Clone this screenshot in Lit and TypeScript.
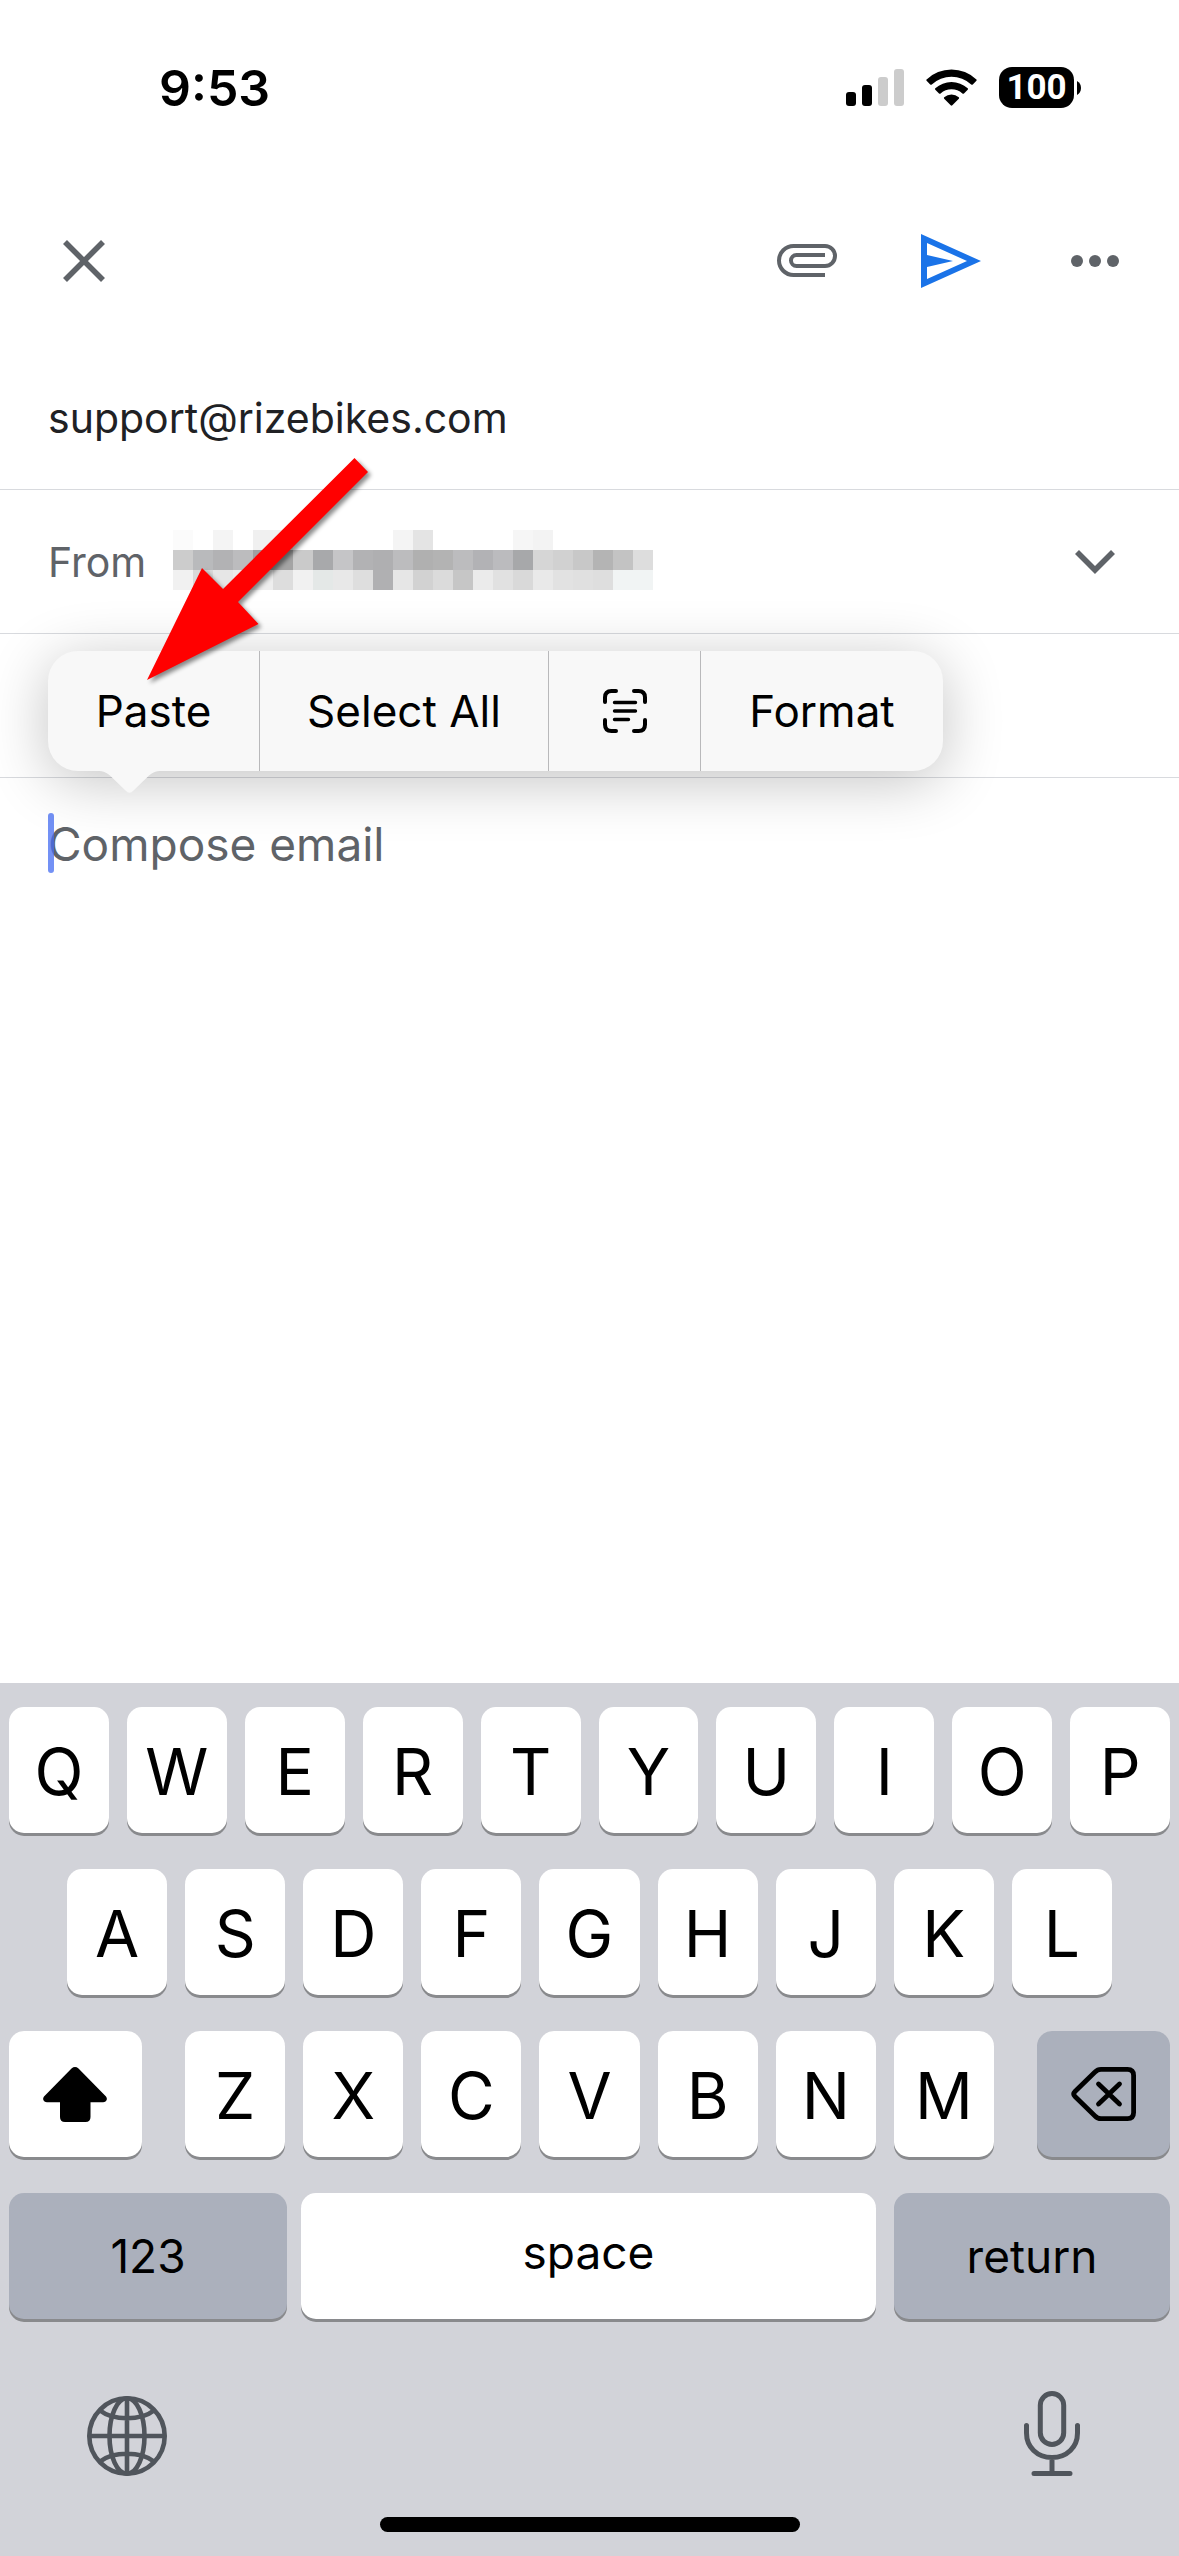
import { LitElement, html, css, svg } from "lit";
import { customElement, property, state } from "lit/decorators.js";
import { classMap } from "lit/directives/class-map.js";

const FONT = css`Inter, "Liberation Sans", sans-serif`;

/* Phone status bar: clock, signal, wifi and battery. */
@customElement("status-bar")
class StatusBar extends LitElement {
  @property() time = "9:53";
  @property({ type: Number }) battery = 100;

  static styles = css`
    :host {
      display: flex;
      align-items: center;
      justify-content: space-between;
      box-sizing: border-box;
      height: 175px;
      padding: 0 98px 0 159px;
      font-family: ${FONT};
      color: #000;
    }
    .time {
      font-size: 50px;
      line-height: 60px;
      font-weight: 600;
    }
    .indicators {
      display: flex;
      align-items: center;
      gap: 22px;
    }
    .battery {
      display: flex;
      align-items: center;
      gap: 3px;
    }
    .level {
      display: grid;
      place-items: center;
      box-sizing: border-box;
      width: 75px;
      height: 41px;
      border-radius: 13px;
      background: #000;
      color: #fff;
      font-family: Roboto, ${FONT};
      font-size: 35px;
      line-height: 40px;
      font-weight: 700;
    }
    svg {
      display: block;
    }
  `;

  render() {
    return html`
      <span class="time">${this.time}</span>
      <div class="indicators">
        <svg width="58" height="37" viewBox="0 0 58 37" role="img" aria-label="Signal">
          <rect x="0" y="23" width="10" height="14" rx="3" />
          <rect x="16" y="16" width="10" height="21" rx="3" />
          <rect x="32" y="8" width="10" height="29" rx="3" fill="#ccc" />
          <rect x="48" y="0" width="10" height="37" rx="3" fill="#ccc" />
        </svg>
        <svg width="51" height="37" viewBox="0 0 51 37" role="img" aria-label="Wi-Fi">
          <path d="M0.6 10.4 A36 36 0 0 1 50.4 10.4 Q51.1 11 50.4 11.8 L46.8 15.4 Q46 16 45.2 15.4 A29 29 0 0 0 5.8 15.4 Q5 16 4.2 15.4 L0.6 11.8 Q-0.1 11 0.6 10.4Z" />
          <path d="M9.3 19.3 A24 24 0 0 1 41.7 19.3 Q42.4 20 41.7 20.7 L38 24.4 Q37.2 25 36.4 24.4 A16.5 16.5 0 0 0 14.6 24.4 Q13.8 25 13 24.4 L9.3 20.7 Q8.6 20 9.3 19.3Z" />
          <path d="M18.2 28.2 A11.6 11.6 0 0 1 32.8 28.2 Q33.5 29 32.8 29.8 L26.3 36.3 Q25.5 37 24.7 36.3 L18.2 29.8 Q17.5 29 18.2 28.2Z" />
        </svg>
        <div class="battery">
          <span class="level">${this.battery}</span>
          <svg width="4" height="14" viewBox="0 0 4 14" aria-hidden="true">
            <path d="M0 0 C2.5 1.2 4 4 4 7 C4 10 2.5 12.8 0 14Z" />
          </svg>
        </div>
      </div>
    `;
  }
}

const CLEAR = "";
/* Grey levels of the obscured sender address, one list per row of cells. */
const MOSAIC: string[][] = [
  ["#fbfbfb", CLEAR, "#f4f4f4", CLEAR, "#f0f0f0", "#f1f1f1", CLEAR, CLEAR, CLEAR, CLEAR, CLEAR, "#f4f4f4",
    "#e4e4e4", CLEAR, CLEAR, CLEAR, CLEAR, "#f6f6f6", "#f3f3f3", CLEAR, CLEAR, CLEAR, CLEAR, CLEAR],
  ["#cccccc", "#b9babc", "#b2b2b4", "#bcbcbe", "#a0a0a2", "#a4a4a4", "#cacaca", "#a8a9ab", "#c5c5c7", "#b2b2b4",
    "#afafb1", "#bcbcbe", "#b0b0b0", "#b3b3b3", "#bcbcbe", "#b2b2b5", "#bbbbbe", "#a7a8aa", "#d6d6d6", "#d1d1d1",
    "#c8c8c8", "#b4b4b4", "#c3c3c3", "#dddddd"],
  ["#f1f1f1", "#d9d9d9", "#e6e6e6", "#ececec", "#eeeeee", "#dddddd", "#f1f1f1", "#e4e8e7", "#e8e8e8", "#dedede",
    "#b0b0b2", "#e6e6e6", "#d2d2d2", "#dbdbdb", "#c6c6c6", "#ebebeb", "#e1e1e1", "#d9d9d9", "#e9e9e9", "#e2e2e2",
    "#e0e0e0", "#dedede", "#f1f4f4", "#f1f4f4"],
];

/* Mail form: toolbar, address rows, message body and the edit menu above it. */
@customElement("mail-composer")
class MailComposer extends LitElement {
  @property() recipient = "support@rizebikes.com";

  static styles = css`
    :host {
      display: flex;
      flex-direction: column;
      font-family: ${FONT};
    }
    button,
    input,
    textarea {
      margin: 0;
      padding: 0;
      border: 0;
      outline: 0;
      background: none;
      font: inherit;
      color: inherit;
    }
    svg {
      display: block;
    }
    .toolbar {
      display: flex;
      align-items: center;
      justify-content: space-between;
      height: 171px;
      padding: 0 48px;
    }
    .actions {
      display: flex;
      gap: 72px;
    }
    .icon {
      display: grid;
      place-items: center;
      width: 72px;
      height: 72px;
      color: #5f6368;
    }
    .icon.send {
      color: #1a73e8;
    }
    .form {
      position: relative;
      flex: 1;
      display: flex;
      flex-direction: column;
    }
    .row {
      display: flex;
      align-items: center;
      box-sizing: border-box;
      height: 144px;
      padding: 0 48px;
      border-bottom: 1px solid #d8dade;
      font-size: 41px;
      line-height: 54px;
      color: #202124;
    }
    .row input {
      flex: 1;
      min-width: 0;
    }
    .label {
      width: 125px;
      color: #5f6368;
    }
    .account {
      flex: 1;
      display: flex;
      align-items: center;
      justify-content: space-between;
    }
    .body {
      position: relative;
      flex: 1;
      display: flex;
      padding: 36px 48px;
    }
    .body textarea {
      flex: 1;
      resize: none;
      font-size: 46px;
      line-height: 60px;
      color: #202124;
    }
    .body textarea::placeholder {
      color: #5f6368;
      opacity: 1;
    }
    .caret {
      position: absolute;
      left: 48px;
      top: 35px;
      width: 6px;
      height: 60px;
      border-radius: 3px;
      background: rgba(68, 108, 242, 0.75);
    }
    .menu {
      position: absolute;
      left: 48px;
      top: 305px;
      display: grid;
      grid-template-columns: 211px 289px 152px 243px;
      height: 120px;
      border-radius: 30px;
      background: #f8f8f8;
      box-shadow: 0 10px 60px rgba(0, 0, 0, 0.24);
      font-size: 44px;
      line-height: 54px;
      color: #000;
    }
    .menu button {
      display: grid;
      place-items: center;
      white-space: nowrap;
    }
    .menu button + button {
      border-left: 1px solid #b9b9bb;
    }
    .tail {
      position: absolute;
      left: 49px;
      top: 119px;
    }
    .pointer {
      position: absolute;
      left: 140px;
      top: 106px;
      pointer-events: none;
      filter: drop-shadow(3px 3px 2px rgba(0, 0, 0, 0.45));
    }
  `;

  render() {
    return html`
      <header class="toolbar">
        <button class="icon" aria-label="Close">
          <svg width="42" height="42" viewBox="0 0 42 42" fill="none" stroke="currentColor" stroke-width="5.6">
            <path d="M2 2L40 40M40 2L2 40" />
          </svg>
        </button>
        <div class="actions">
          <button class="icon" aria-label="Attach file">
            <svg width="60" height="33" viewBox="0 0 60 33" fill="none" stroke="currentColor" stroke-width="4">
              <path d="M48 31H16.5A14.5 14.5 0 0 1 16.5 2H48A10 10 0 0 1 48 22H19.5A5.5 5.5 0 0 1 19.5 11H48" />
            </svg>
          </button>
          <button class="icon send" aria-label="Send">
            <svg width="60" height="54" viewBox="0 0 60 54" fill="currentColor" fill-rule="evenodd">
              <path d="M0 0L60 27L0 54ZM6 9V21L32 27L6 33V45L46 27Z" />
            </svg>
          </button>
          <button class="icon" aria-label="More options">
            <svg width="48" height="12" viewBox="0 0 48 12" fill="currentColor">
              <circle cx="6" cy="6" r="6" />
              <circle cx="24" cy="6" r="6" />
              <circle cx="42" cy="6" r="6" />
            </svg>
          </button>
        </div>
      </header>
      <div class="form">
        <div class="row">
          <input type="email" aria-label="To" .value=${this.recipient} />
        </div>
        <div class="row">
          <span class="label" id="from">From</span>
          <button class="account" aria-labelledby="from">
            <svg width="480" height="63" viewBox="0 0 480 63" shape-rendering="crispEdges" aria-hidden="true">
              ${MOSAIC.map((cells, y) =>
                cells.map((fill, x) =>
                  fill ? svg`<rect x=${x * 20} y=${y * 20} width="20" height="20" fill=${fill} />` : null
                )
              )}
            </svg>
            <svg width="72" height="24" viewBox="0 0 72 24" fill="none" stroke="#5f6368" stroke-width="5.6">
              <path d="M18 2L36 20L54 2" />
            </svg>
          </button>
        </div>
        <div class="row">
          <input type="text" aria-label="Subject" />
        </div>
        <div class="body">
          <textarea aria-label="Message" placeholder="Compose email"></textarea>
          <span class="caret"></span>
        </div>
        <div class="menu" role="toolbar" aria-label="Edit">
          <button>Paste</button>
          <button>Select All</button>
          <button aria-label="Scan text">
            <svg width="44" height="44" viewBox="0 0 44 44" fill="none" stroke="#000" stroke-width="4" stroke-linecap="round">
              <path d="M2 13V8.500Q2 2 8.500 2H13M31 2H35.500Q42 2 42 8.500V13M42 31V35.500Q42 42 35.500 42H31M13 42H8.500Q2 42 2 35.500V31" />
              <path d="M11.500 13.500H32.500M11.500 22H32.500M11.500 30.500H25.500" stroke-width="3.400" />
            </svg>
          </button>
          <button>Format</button>
          <svg class="tail" width="66" height="23" viewBox="0 0 66 23" aria-hidden="true">
            <path d="M0 0V1C7 1 10.500 3 14 6.500L28.500 20.500Q32.500 25 36.500 20.500L51 6.500C54.500 3 58 1 65 1V0Z" fill="#f8f8f8" />
          </svg>
        </div>
        <svg class="pointer" width="240" height="236" viewBox="0 0 240 236" aria-hidden="true">
          <path d="M7 228L62 116L83 137L214.500 6L228 20L98 150L118.500 172Z" fill="#f00" />
        </svg>
      </div>
    `;
  }
}

/* On-screen keyboard with letters, control keys and the home indicator. */
@customElement("letter-keyboard")
class LetterKeyboard extends LitElement {
  @state() private shifted = true;

  static styles = css`
    :host {
      display: flex;
      flex-direction: column;
      gap: 36px;
      padding: 24px 9px;
      background: #d2d3d9;
      font-family: ${FONT};
    }
    svg {
      display: block;
    }
    .row {
      display: flex;
      gap: 18px;
    }
    .inset {
      padding: 0 58px;
    }
    .third {
      display: grid;
      grid-template-columns: 133fr 809fr 133fr;
      gap: 43px;
    }
    .fourth {
      display: grid;
      grid-template-columns: 278fr 579fr 276fr;
      gap: 14px;
    }
    .key {
      flex: 1;
      display: grid;
      place-items: center;
      min-width: 0;
      height: 126px;
      margin: 0;
      padding: 4px 0 0;
      border: 0;
      border-radius: 15px;
      background: #fff;
      box-shadow: 0 3px 0 #898a8d;
      font: inherit;
      font-size: 64px;
      line-height: 78px;
      color: #000;
    }
    .word {
      padding: 0;
      font-size: 46px;
      line-height: 60px;
    }
    .dark {
      background: #abb0bc;
    }
    .space {
      margin-right: 4px;
      padding: 0 0 8px;
    }
    .tools {
      display: flex;
      justify-content: space-between;
      align-items: center;
      height: 90px;
      padding: 0 74px;
      margin-top: 36px;
    }
    .tool {
      display: grid;
      place-items: center;
      width: 88px;
      height: 90px;
      margin: 0;
      padding: 0;
      border: 0;
      background: none;
      color: #50555c;
    }
    .home {
      align-self: center;
      width: 420px;
      max-width: 60%;
      height: 15px;
      border-radius: 8px;
      background: #000;
    }
  `;

  private letters(keys: string) {
    return [...keys].map(
      (key) => html`<button class="key">${this.shifted ? key : key.toLowerCase()}</button>`
    );
  }

  render() {
    return html`
      <div class="row">${this.letters("QWERTYUIOP")}</div>
      <div class="row inset">${this.letters("ASDFGHJKL")}</div>
      <div class="third">
        <button
          class=${classMap({ key: true, word: true, dark: !this.shifted })}
          aria-label="Shift"
          @click=${() => (this.shifted = !this.shifted)}
        >
          <svg width="66" height="55" viewBox="0 0 66 55">
            <path d="M28.500 1.500Q32 -1.300 35.500 1.500L63 29.500Q65 32.500 62.500 34.500Q61.500 35.300 60 35.300H47.500V50Q47.500 55 42.500 55H22Q17 55 17 50V35.300H4Q2.500 35.300 1.500 34.500Q-1 32.500 1 29.500Z" />
          </svg>
        </button>
        <div class="row">${this.letters("ZXCVBNM")}</div>
        <button class="key word dark" aria-label="Delete">
          <svg width="66" height="54" viewBox="0 0 66 54" fill="none" stroke="#000" stroke-width="4.800" stroke-linecap="round" stroke-linejoin="round">
            <path d="M30 2.400H56.500Q62.600 2.400 62.600 8.500V45.500Q62.600 51.600 56.500 51.600H30Q26.500 51.600 24 49L4 29.500Q1.500 27 4 24.500L24 5Q26.500 2.400 30 2.400Z" />
            <path d="M27.500 17L48.500 37M48.500 17L27.500 37" />
          </svg>
        </button>
      </div>
      <div class="fourth">
        <button class="key word dark">123</button>
        <button class="key word space">space</button>
        <button class="key word dark">return</button>
      </div>
      <div class="tools">
        <button class="tool" aria-label="Next keyboard">
          <svg width="80" height="80" viewBox="0 0 80 80" fill="none" stroke="currentColor" stroke-width="4.600">
            <circle cx="40" cy="40" r="37.700" />
            <ellipse cx="40" cy="40" rx="17.500" ry="37.700" />
            <path d="M40 2V78M2 40H78M13 14.500Q23 22.300 40 22.300T67 14.500M13 65.500Q23 57.700 40 57.700T67 65.500" />
          </svg>
        </button>
        <button class="tool" aria-label="Dictate">
          <svg width="56" height="90" viewBox="0 0 56 90" fill="none" stroke="currentColor" stroke-width="5" stroke-linecap="round">
            <rect x="16.300" y="2.500" width="23.400" height="51" rx="11.700" />
            <path d="M2.500 34.500V42C2.500 56 13 66.500 28 66.500S53.500 56 53.500 42V34.500M28 67V81M10 82.500H46" />
          </svg>
        </button>
      </div>
      <div class="home"></div>
    `;
  }
}

@customElement("app-root")
class AppRoot extends LitElement {
  static styles = css`
    :host {
      display: flex;
      flex-direction: column;
      min-height: 100vh;
      background: #fff;
    }
    .composer {
      flex: 1;
    }
  `;

  render() {
    return html`
      <status-bar></status-bar>
      <mail-composer class="composer"></mail-composer>
      <letter-keyboard></letter-keyboard>
    `;
  }
}
